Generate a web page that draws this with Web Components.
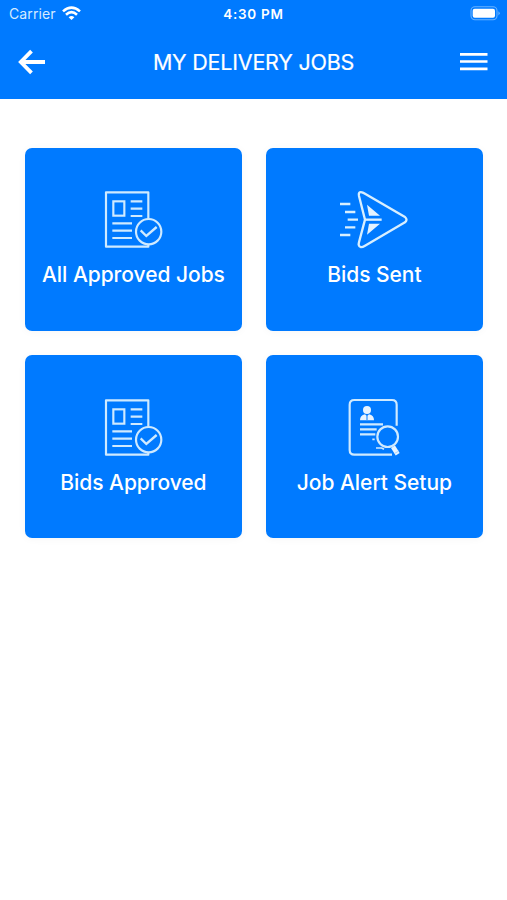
<!DOCTYPE html>
<html lang="en">
<head>
<meta charset="utf-8">
<meta name="viewport" content="width=device-width, initial-scale=1">
<title>My Delivery Jobs</title>
<style>
    body {
        margin: 0;
        background: #fff;
        font-family: Inter, "Liberation Sans", sans-serif;
    }
</style>
</head>
<body>
<delivery-app>
    <status-bar carrier="Carrier" time="4:30 PM"></status-bar>
    <nav-header>MY DELIVERY JOBS</nav-header>
    <job-grid>
        <job-card icon="document">All Approved Jobs</job-card>
        <job-card icon="send">Bids Sent</job-card>
        <job-card icon="document">Bids Approved</job-card>
        <job-card icon="search">Job Alert Setup</job-card>
    </job-grid>
</delivery-app>

<script>
const ICONS = {
    document: `
        <svg viewBox="-6 30 240 180" fill="none" stroke="#cfeaff" stroke-width="6.5">
            <path d="M160 116V37H33V200H160V193" stroke-linejoin="round"/>
            <rect x="55" y="64" width="33" height="43"/>
            <path d="M107 64H142M107 86H142M107 108H142M52 130H111M52 152H111M52 174H111"/>
            <circle cx="161" cy="155" r="38"/>
            <path d="M137 151L154 168L185 141" stroke-width="7"/>
        </svg>`,
    send: `
        <svg viewBox="13 30 240 180" fill="none" stroke="#d8efff" stroke-width="7">
            <path d="M106 119L88 48Q85 34 97 37Q101 38 106 41L226 111Q235 119 226 127L106 197Q90 207 87 194Q87 191 88 187Z" stroke-linejoin="round"/>
            <path d="M106 119H156" stroke-width="7"/>
            <path d="M112 74L151 107H118ZM118 131H151L112 164Z" fill="#e4f3ff" stroke="none"/>
            <path d="M31 72H62M46 96H77M54 119H85M46 142H77M31 165H62" stroke-width="7"/>
        </svg>`,
    search: `
        <svg viewBox="-3 30 240 180" fill="none" stroke="#cfeaff" stroke-width="6.5">
            <path d="M185 113V50Q185 36 171 36H58Q44 36 44 50V186Q44 200 58 200H171"/>
            <circle cx="96" cy="66" r="12" fill="#e8f4ff" stroke="none"/>
            <path d="M75 97Q75 82 90 79L96 85L102 79Q117 82 117 97Z" fill="#e8f4ff" stroke="none"/>
            <path d="M96 84V96" stroke="#007aff" stroke-width="3"/>
            <path d="M75 109H144M75 124H125M75 139H121"/>
            <path d="M112 154H119M123 180H140L147 184" stroke-width="5"/>
            <circle cx="158" cy="146" r="31"/>
            <path d="M174 176L188 199" stroke="#e8f4ff" stroke-width="14"/>
            <path d="M179 196L192 189" stroke="#a5d2ff" stroke-width="3"/>
        </svg>`
};

/**
 * Full page shell
 */
class DeliveryApp extends HTMLElement {
    constructor() {
        super();
        this.attachShadow({ mode: 'open' });
        this.shadowRoot.innerHTML = `
        <style>
            :host {
                --app-blue: #007aff;
                display: flex;
                flex-direction: column;
                height: 100vh;
                overflow: hidden;
            }
        </style>
        <slot></slot>
        `;
    }
}

/**
 * Carrier, clock and battery row
 */
class StatusBar extends HTMLElement {
    constructor() {
        super();
        this.attachShadow({ mode: 'open' });
    }

    connectedCallback() {
        this.render();
    }

    render() {
        this.shadowRoot.innerHTML = `
        <style>
            :host {
                display: grid;
                grid-template-columns: 1fr auto 1fr;
                align-items: center;
                height: 27px;
                padding: 0 6px;
                box-sizing: border-box;
                background: var(--app-blue);
                color: #fff;
                font-size: 14px;
                line-height: 17px;
            }
            .carrier {
                display: flex;
                align-items: center;
                gap: 6px;
                padding-left: 3px;
                color: #d5eaff;
                letter-spacing: 0.1px;
            }
            .time {
                padding-top: 1px;
                font-size: 13.5px;
                font-weight: 600;
                letter-spacing: 0.7px;
            }
            .battery {
                justify-self: end;
            }
            svg {
                display: block;
            }
        </style>
        <div class="carrier">
            <span>${this.getAttribute('carrier')}</span>
            <svg width="19" height="15" viewBox="0 0 19 15" fill="none" stroke="#fff" stroke-width="2.6">
                <path d="M1 5.4Q9.5 -2.2 18 5.4"/>
                <path d="M4 8.7Q9.5 3.6 15 8.7"/>
                <path d="M6.6 11.2Q9.5 8.8 12.4 11.2L9.5 14.1Z" fill="#fff" stroke="none"/>
            </svg>
        </div>
        <div class="time">${this.getAttribute('time')}</div>
        <svg class="battery" width="31" height="15" viewBox="0 0 31 15">
            <rect x="1" y=".8" width="26" height="13" rx="4" fill="none" stroke="#68b2ff" stroke-width="1.1"/>
            <rect x="2.7" y="2.8" width="22.3" height="9" rx="2" fill="#fff"/>
            <path d="M28.4 5.2Q31.2 7.3 28.4 9.4Z" fill="#68b2ff"/>
        </svg>
        `;
    }
}

/**
 * Title bar with back arrow and menu
 */
class NavHeader extends HTMLElement {
    constructor() {
        super();
        this.attachShadow({ mode: 'open' });
        this.shadowRoot.innerHTML = `
        <style>
            :host {
                display: flex;
                align-items: center;
                justify-content: space-between;
                height: 71.5px;
                padding: 0 19px 2px 18px;
                box-sizing: border-box;
                background: var(--app-blue);
                color: #fff;
            }
            button {
                display: block;
                padding: 0;
                border: 0;
                background: none;
            }
            svg {
                display: block;
            }
            h1 {
                margin: 0;
                padding: 1px 0 0 1px;
                font-size: 21.5px;
                font-weight: 400;
                line-height: 28px;
                letter-spacing: -0.22px;
                white-space: nowrap;
                -webkit-text-stroke: 0.2px #fff;
            }
        </style>
        <button type="button" aria-label="Back">
            <svg width="28" height="26" viewBox="0 0 28 26" fill="none" stroke="#fff" stroke-width="3.8">
                <path d="M13.5 2.2L2.8 13L13.5 23.8M3 13H27"/>
            </svg>
        </button>
        <h1><slot></slot></h1>
        <button type="button" aria-label="Menu">
            <svg width="28" height="20" viewBox="0 0 28 20" fill="none" stroke="#fff" stroke-width="2.7">
                <path d="M0 2.3H27.5M0 9.5H27.5M0 16.9H27.5"/>
            </svg>
        </button>
        `;
    }
}

/**
 * Two column grid of cards
 */
class JobGrid extends HTMLElement {
    constructor() {
        super();
        this.attachShadow({ mode: 'open' });
        this.shadowRoot.innerHTML = `
        <style>
            :host {
                display: grid;
                grid-template-columns: 1fr 1fr;
                grid-auto-rows: 183px;
                gap: 24.5px;
                padding: 49.2px 24.4px 0 25.2px;
            }
        </style>
        <slot></slot>
        `;
    }
}

class JobCard extends HTMLElement {
    constructor() {
        super();
        this.attachShadow({ mode: 'open' });
    }

    connectedCallback() {
        this.render();
    }

    render() {
        const icon = ICONS[this.getAttribute('icon')] || '';

        this.shadowRoot.innerHTML = `
        <style>
            :host {
                display: flex;
                flex-direction: column;
                align-items: center;
                padding-top: 42.5px;
                box-sizing: border-box;
                border-radius: 7px;
                background: var(--app-blue);
                box-shadow: 0 1px 9px rgba(0, 0, 0, 0.04);
                color: #fff;
            }
            svg {
                display: block;
                width: 80px;
                height: 60px;
            }
            .label {
                margin-top: 11px;
                font-size: 21px;
                font-weight: 500;
                line-height: 28px;
                letter-spacing: -0.04px;
                white-space: nowrap;
            }
        </style>
        ${icon}
        <div class="label"><slot></slot></div>
        `;
    }
}

customElements.define('delivery-app', DeliveryApp);
customElements.define('status-bar', StatusBar);
customElements.define('nav-header', NavHeader);
customElements.define('job-grid', JobGrid);
customElements.define('job-card', JobCard);
</script>
</body>
</html>
